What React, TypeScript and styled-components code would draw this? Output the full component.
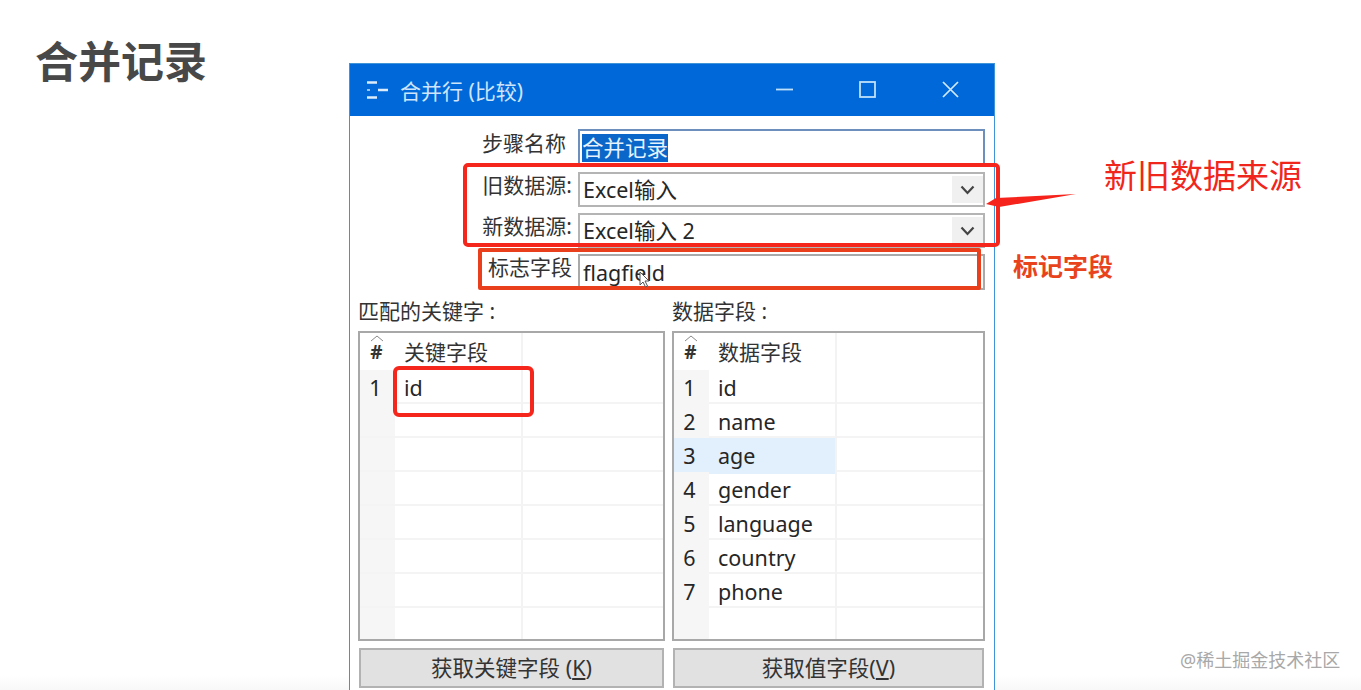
import styled, { createGlobalStyle } from "styled-components";

const FONT = '"Noto Sans", "Noto Sans CJK SC", sans-serif';

const GlobalStyle = createGlobalStyle`
  html, body {
    margin: 0;
    padding: 0;
    background: #fff;
    font-family: ${FONT};
  }
`;

const dataFields = ["id", "name", "age", "gender", "language", "country", "phone", ""];
const keyFields = ["id", "", "", "", "", "", "", ""];

type GridProps = {
  title: string;
  rows: string[];
  activeRow?: number;
  numbered: number;
};

function FieldGrid({ title, rows, activeRow, numbered }: GridProps) {
  return (
    <GridBox>
      <HeadRow>
        <HeadIndex>
          <SortCaret viewBox="0 0 14 7" aria-hidden="true">
            <path d="M1 6 7 1l6 5" fill="none" stroke="#8a8a8a" strokeWidth="1" />
          </SortCaret>
          #
        </HeadIndex>
        <HeadCell>{title}</HeadCell>
        <HeadBlank />
      </HeadRow>
      {rows.map((value, i) => (
        <DataRow key={i} $last={i === rows.length - 1}>
          <IndexCell $active={i === activeRow}>{i < numbered ? i + 1 : ""}</IndexCell>
          <ValueCell $active={i === activeRow}>{value}</ValueCell>
          <BlankCell />
        </DataRow>
      ))}
    </GridBox>
  );
}

function Chevron() {
  return (
    <svg width="15" height="10" viewBox="0 0 15 10" aria-hidden="true">
      <path d="M1.5 1.5 7.5 8l6-6.5" fill="none" stroke="#444" strokeWidth="2.2" />
    </svg>
  );
}

export default function App() {
  return (
    <Page>
      <GlobalStyle />
      <TitleColumn>
        <SlideTitle>合并记录</SlideTitle>
      </TitleColumn>

      <Dialog>
        <TitleBar>
          <svg width="22" height="18" viewBox="0 0 22 18" aria-hidden="true">
            <path d="M1 1.5h10M12 9h10M1 16.5h10" stroke="#dcecfb" strokeWidth="2.4" fill="none" />
            <path d="M1 9h3" stroke="#dcecfb" strokeWidth="1.4" fill="none" />
          </svg>
          <TitleText>合并行 (比较)</TitleText>
          <WindowButtons>
            <svg width="17" height="17" viewBox="0 0 17 17" aria-hidden="true">
              <path d="M0 8.5h17" stroke="#bfe0fb" strokeWidth="1.8" />
            </svg>
            <svg width="17" height="17" viewBox="0 0 17 17" aria-hidden="true">
              <rect x="1" y="1" width="15" height="15" fill="none" stroke="#bfe0fb" strokeWidth="1.8" />
            </svg>
            <svg width="17" height="17" viewBox="0 0 17 17" aria-hidden="true">
              <path d="M1 1l15 15M16 1 1 16" stroke="#d3eafc" strokeWidth="1.7" />
            </svg>
          </WindowButtons>
        </TitleBar>

        <DialogBody>
          <Form>
            <NameLabel>步骤名称</NameLabel>
            <NameInput>
              <Selection>合并记录</Selection>
            </NameInput>
            <FieldLabel>旧数据源:</FieldLabel>
            <Combo>
              Excel输入
              <ComboArrow>
                <Chevron />
              </ComboArrow>
            </Combo>
            <FieldLabel>新数据源:</FieldLabel>
            <Combo>
              Excel输入 2
              <ComboArrow>
                <Chevron />
              </ComboArrow>
            </Combo>
            <FieldLabel>标志字段</FieldLabel>
            <FlagInput>flagfield</FlagInput>
          </Form>

          <Lists>
            <ListColumn>
              <ListLabel>匹配的关键字 :</ListLabel>
              <FieldGrid title="关键字段" rows={keyFields} numbered={1} />
              <ActionButton>
                获取关键字段 (<u>K</u>)
              </ActionButton>
            </ListColumn>
            <ListColumn>
              <ListLabel>数据字段 :</ListLabel>
              <FieldGrid title="数据字段" rows={dataFields} numbered={7} activeRow={2} />
              <ActionButton>
                获取值字段(<u>V</u>)
              </ActionButton>
            </ListColumn>
          </Lists>
        </DialogBody>
      </Dialog>

      <Callouts>
        <SourceNote>新旧数据来源</SourceNote>
        <FlagNote>标记字段</FlagNote>
      </Callouts>

      <SourceMark />
      <FlagMark />
      <KeyMark />
      <Arrow viewBox="0 0 92 16" aria-hidden="true">
        <path d="M0 10 10 4 90 0 13 13Z" fill="#f5231b" />
      </Arrow>
      <Pointer viewBox="0 0 12 17" aria-hidden="true">
        <path d="M1 1v13l3-3 2.5 5 2-1-2.5-5H10Z" fill="#fff" stroke="#555" strokeWidth="1" />
      </Pointer>
      <Watermark>@稀土掘金技术社区</Watermark>
    </Page>
  );
}

const Page = styled.div`
  position: relative;
  display: flex;
  align-items: flex-start;
  width: 1361px;
  height: 690px;
  overflow: hidden;
  background: linear-gradient(to bottom, #fff 676px, #f8f8f8 690px);
  color: #262626;
`;

const TitleColumn = styled.div`
  flex: 0 0 349px;
  box-sizing: border-box;
  padding: 33px 0 0 35px;
`;

const SlideTitle = styled.h1`
  margin: 0;
  font-size: 43px;
  line-height: 58px;
  font-weight: 700;
  color: #484848;
`;

const Dialog = styled.div`
  flex: 0 0 646px;
  box-sizing: border-box;
  margin-top: 63px;
  border: 1px solid #3f94d8;
  background: #fff;
`;

const TitleBar = styled.div`
  display: flex;
  align-items: center;
  height: 52px;
  padding: 0 35px 0 16px;
  background: #0068d8;
`;

const TitleText = styled.span`
  margin-left: 12px;
  font-size: 21px;
  color: #cfe5fb;
`;

const WindowButtons = styled.div`
  display: flex;
  gap: 66px;
  margin-left: auto;
  margin-top: -1px;
`;

const DialogBody = styled.div`
  padding: 13px 8px 24px 8px;
`;

const Form = styled.div`
  display: grid;
  grid-template-columns: 214px 407px;
  grid-template-rows: 37px 35px 35px 36px;
  column-gap: 6px;
  row-gap: 6px;
`;

const FieldLabel = styled.label`
  justify-self: end;
  font-size: 21px;
  line-height: 26px;
  white-space: nowrap;
  color: #333;
`;

const NameLabel = styled(FieldLabel)`
  padding-right: 6px;
  line-height: 28px;
`;

const NameInput = styled.div`
  box-sizing: border-box;
  border: 2px solid #6d8fbd;
  border-bottom: 0;
  padding: 3px 0 0 2px;
  font-size: 21.5px;
  line-height: 28px;
`;

const Selection = styled.span`
  display: inline-block;
  background: #0a67c9;
  color: #e6f2fd;
`;

const Combo = styled.div`
  position: relative;
  box-sizing: border-box;
  border: 2px solid #b4b4b4;
  padding-left: 3px;
  font-size: 21.5px;
  line-height: 32px;
`;

const ComboArrow = styled.span`
  position: absolute;
  top: 2px;
  right: 0;
  bottom: 2px;
  width: 31px;
  display: flex;
  align-items: center;
  justify-content: center;
  background: #f0f0f0;
`;

const FlagInput = styled.div`
  box-sizing: border-box;
  border: 2px solid #a9a9a9;
  padding-left: 3px;
  font-size: 21.5px;
  line-height: 34px;
`;

const Lists = styled.div`
  display: grid;
  grid-template-columns: 307px 313px;
  column-gap: 7px;
  margin-top: 7px;
`;

const ListColumn = styled.div`
  display: flex;
  flex-direction: column;
`;

const ListLabel = styled.div`
  height: 34px;
  font-size: 21px;
  line-height: 28px;
  white-space: nowrap;
  color: #333;
`;

const GridBox = styled.div`
  box-sizing: border-box;
  height: 310px;
  border: 2px solid #a8a8a8;
  overflow: hidden;
`;

const HeadRow = styled.div`
  display: grid;
  grid-template-columns: 35px 128px 1fr;
  height: 37px;
`;

const HeadIndex = styled.div`
  position: relative;
  box-sizing: border-box;
  padding-right: 2px;
  text-align: center;
  font-size: 19px;
  font-weight: 700;
  line-height: 38px;
  color: #333;
`;

const SortCaret = styled.svg`
  position: absolute;
  top: 2px;
  left: 10px;
  width: 14px;
  height: 7px;
`;

const HeadCell = styled.div`
  padding-left: 9px;
  font-size: 21px;
  line-height: 38px;
  border-right: 2px solid #f3f3f3;
  color: #333;
`;

const HeadBlank = styled.div``;

const DataRow = styled.div<{ $last: boolean }>`
  display: grid;
  grid-template-columns: 35px 128px 1fr;
  height: 34px;
  box-sizing: border-box;
  border-bottom: ${(p) => (p.$last ? "0" : "2px solid #f4f4f4")};
`;

const IndexCell = styled.div<{ $active: boolean }>`
  box-sizing: border-box;
  padding-right: 4px;
  text-align: center;
  font-size: 21.5px;
  line-height: 36px;
  background: ${(p) => (p.$active ? "#e2effc" : "#f6f6f6")};
`;

const ValueCell = styled.div<{ $active: boolean }>`
  padding-left: 9px;
  font-size: 21.5px;
  line-height: 36px;
  border-right: 2px solid #f3f3f3;
  background: ${(p) => (p.$active ? "#e2effc" : "transparent")};
`;

const BlankCell = styled.div``;

const ActionButton = styled.button`
  box-sizing: border-box;
  height: 40px;
  margin: 7px 1px 0;
  border: 2px solid #b2b2b2;
  border-radius: 0;
  background: #e1e1e1;
  font-family: ${FONT};
  font-size: 21.5px;
  line-height: 34px;
  padding: 0;
  color: #333;
`;

const Callouts = styled.div`
  flex: 1;
  display: flex;
  flex-direction: column;
  align-items: flex-start;
  padding: 152px 0 0 18px;
`;

const SourceNote = styled.div`
  margin-left: 91px;
  font-size: 33px;
  line-height: 48px;
  color: #f0261c;
`;

const FlagNote = styled.div`
  margin-top: 48px;
  font-size: 25px;
  line-height: 36px;
  font-weight: 700;
  color: #e8431c;
`;

const SourceMark = styled.div`
  position: absolute;
  top: 163px;
  left: 463px;
  width: 529px;
  height: 76px;
  border: 4px solid #f5271c;
  border-radius: 5px;
`;

const FlagMark = styled.div`
  position: absolute;
  top: 248px;
  left: 478px;
  width: 495px;
  height: 34px;
  border: 4px solid #ea3f1c;
  border-radius: 2px;
`;

const KeyMark = styled.div`
  position: absolute;
  top: 366px;
  left: 393px;
  width: 133px;
  height: 43px;
  border: 4px solid #f5271c;
  border-radius: 6px;
`;

const Arrow = styled.svg`
  position: absolute;
  top: 194px;
  left: 986px;
  width: 92px;
  height: 16px;
`;

const Pointer = styled.svg`
  position: absolute;
  top: 271px;
  left: 639px;
  width: 12px;
  height: 17px;
`;

const Watermark = styled.div`
  position: absolute;
  top: 648px;
  left: 1180px;
  font-size: 18px;
  line-height: 24px;
  white-space: nowrap;
  color: #a8a8a8;
`;
